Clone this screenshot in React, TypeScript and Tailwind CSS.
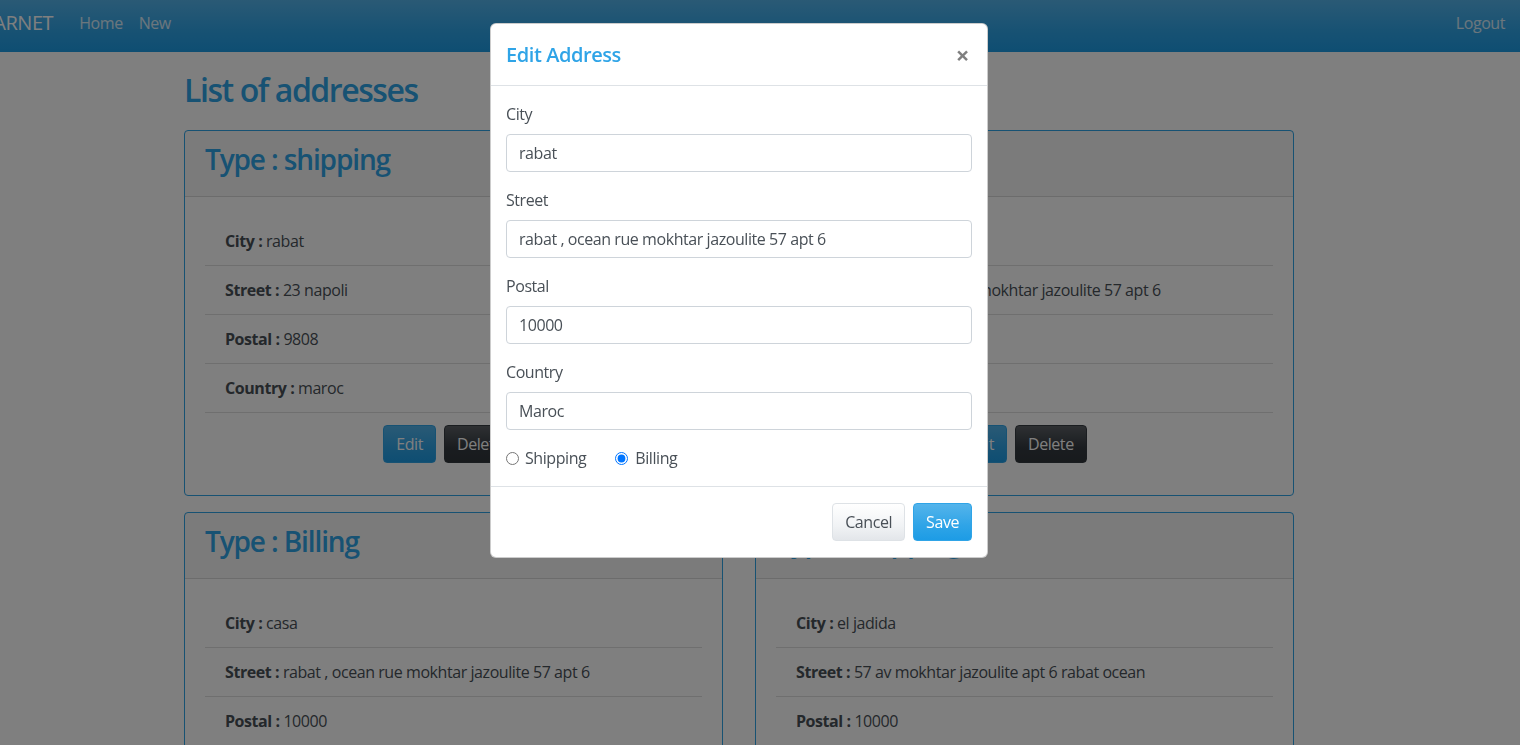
import React from "react";

type Address = {
  type: string;
  city: string;
  street: string;
  postal: string;
  country: string;
};

const addresses: Address[] = [
  { type: "shipping", city: "rabat", street: "23 napoli", postal: "9808", country: "maroc" },
  { type: "Billing", city: "rabat", street: "rabat , ocean rue mokhtar jazoulite 57 apt 6", postal: "10000", country: "Maroc" },
  { type: "Billing", city: "casa", street: "rabat , ocean rue mokhtar jazoulite 57 apt 6", postal: "10000", country: "maroc" },
  { type: "shipping", city: "el jadida", street: "57 av mokhtar jazoulite apt 6 rabat ocean", postal: "10000", country: "maroc" },
];

const font = { fontFamily: '"Open Sans", "Noto Sans", sans-serif' };

function Navbar() {
  return (
    <nav className="flex h-[52px] items-start bg-[linear-gradient(#54b4eb,#2fa4e7_60%,#1d9ce5)] pr-[15px] pt-[10px]">
      <span className="-ml-[19px] mr-[18px] text-[20px] leading-[26px] text-white">CARNET</span>
      <a className="px-2 text-[16px] leading-[26px] text-white/80">Home</a>
      <a className="px-2 text-[16px] leading-[26px] text-white/80">New</a>
      <a className="ml-auto text-[16px] leading-[26px] text-white/80">Logout</a>
    </nav>
  );
}

function AddressCard({ a }: { a: Address }) {
  const rows: [string, string][] = [
    ["City", a.city],
    ["Street", a.street],
    ["Postal", a.postal],
    ["Country", a.country],
  ];
  return (
    <div className="rounded border border-[#2fa4e7] bg-white">
      <div className="border-b border-black/[0.125] bg-black/[0.03] px-5 py-3">
        <h3 className="mb-2 text-[28px] font-semibold leading-[33px] tracking-[-0.04em] text-[#2fa4e7]">Type : {a.type}</h3>
      </div>
      <div className="p-5">
        <ul>
          {rows.map(([k, v]) => (
            <li key={k} className="border-b border-black/[0.125] px-5 py-3 text-[16px] leading-6 text-[#495057]">
              <b className="font-bold">{k} :</b> {v}
            </li>
          ))}
        </ul>
        <div className="my-3 flex justify-center">
          <button className="mr-2 rounded border border-[#2fa4e7] bg-[linear-gradient(#54b4eb,#2fa4e7_60%,#1d9ce5)] px-3 py-1.5 text-[16px] leading-6 text-white">
            Edit
          </button>
          <button className="mr-2 rounded border border-[#343a40] bg-[linear-gradient(#5d6166,#343a40_60%,#30353a)] px-3 py-1.5 text-[16px] leading-6 text-white">
            Delete
          </button>
        </div>
      </div>
    </div>
  );
}

function Field({ label, value }: { label: string; value: string }) {
  return (
    <div className="mb-4">
      <div className="mb-2 text-[16px] leading-6 text-[#495057]">{label}</div>
      <div className="h-[38px] rounded border border-[#ced4da] px-3 py-1.5 text-[16px] leading-6 text-[#495057]">{value}</div>
    </div>
  );
}

function EditModal() {
  return (
    <div className="fixed inset-0 bg-black/50">
      <div className="absolute left-[490px] top-[23px] w-[498px] rounded-md border border-black/20 bg-white">
        <div className="flex items-center justify-between border-b border-[#dee2e6] px-[15px] py-4">
          <h5 className="text-[20px] font-semibold leading-[29px] text-[#2fa4e7]">Edit Address</h5>
          <span className="mr-[3px] text-[24px] font-bold leading-none text-black/50">×</span>
        </div>
        <div className="px-[15px] pt-4">
          <Field label="City" value="rabat" />
          <Field label="Street" value="rabat , ocean rue mokhtar jazoulite 57 apt 6" />
          <Field label="Postal" value="10000" />
          <Field label="Country" value="Maroc" />
          <div className="mb-4 flex items-center gap-[29px] text-[16px] leading-6 text-[#495057]">
            <label className="flex items-center gap-[6px]">
              <input type="radio" name="t" readOnly className="m-0 size-[13px]" />
              Shipping
            </label>
            <label className="flex items-center gap-[7px]">
              <input type="radio" name="t" readOnly checked className="m-0 size-[13px]" />
              Billing
            </label>
          </div>
        </div>
        <div className="flex justify-end gap-2 border-t border-[#dee2e6] px-[15px] py-4">
          <button className="rounded border border-[#dee2e6] bg-[linear-gradient(#ffffff,#f1f3f5_60%,#e3e6ea)] px-3 py-1.5 text-[16px] leading-6 text-[#495057]">
            Cancel
          </button>
          <button className="rounded border border-[#2fa4e7] bg-[linear-gradient(#54b4eb,#2fa4e7_60%,#1d9ce5)] px-3 py-1.5 text-[16px] leading-6 text-white">
            Save
          </button>
        </div>
      </div>
    </div>
  );
}

export default function App() {
  return (
    <div style={font} className="min-h-screen overflow-hidden bg-white tracking-[-0.027em]">
      <Navbar />
      <div className="ml-[184px] w-[1110px]">
        <h2 className="mb-[21px] mt-[19px] text-[32px] font-semibold leading-[1.2] tracking-[-0.045em] text-[#2fa4e7]">List of addresses</h2>
        <div className="grid grid-cols-2 gap-x-8 gap-y-[16px]">
          {addresses.map((a, i) => (
            <AddressCard key={i} a={a} />
          ))}
        </div>
      </div>
      <EditModal />
    </div>
  );
}
